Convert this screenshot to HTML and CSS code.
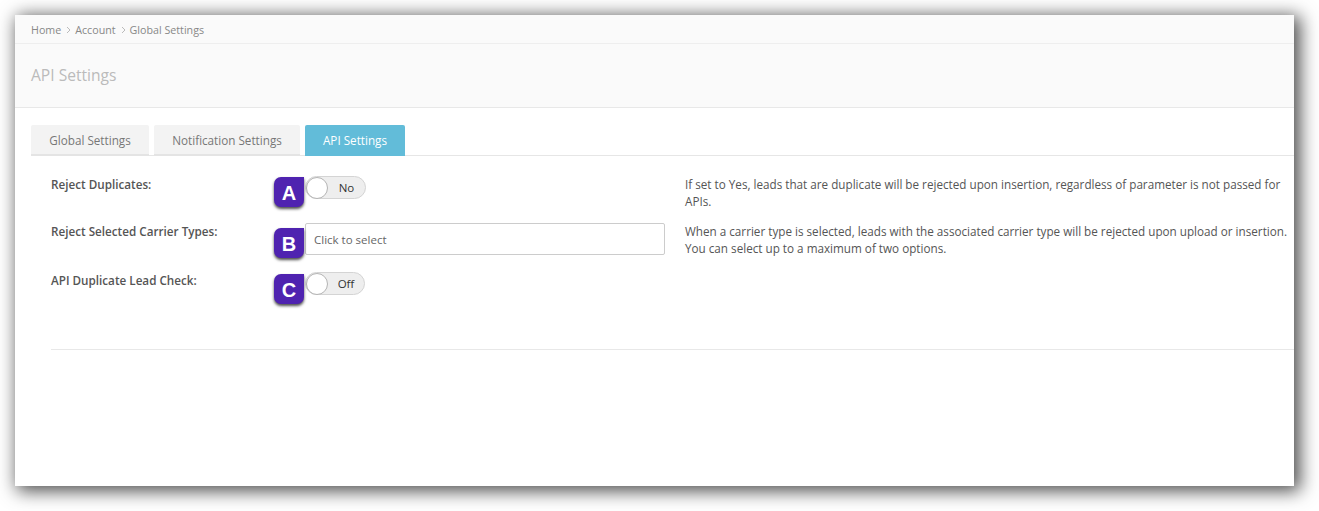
FILE: index.html
```html
<!DOCTYPE html>
<html lang="en">
<head>
<meta charset="utf-8">
<title>API Settings</title>
<link rel="stylesheet" href="styles.css">
</head>
<body>
<main class="window">
  <nav class="crumbs">
    <span>Home</span><svg class="chev" viewBox="0 0 5 8"><path d="M1 1l3 3-3 3"/></svg>
    <span>Account</span><svg class="chev" viewBox="0 0 5 8"><path d="M1 1l3 3-3 3"/></svg>
    <span>Global Settings</span>
  </nav>
  <header class="page-head"><h1>API Settings</h1></header>
  <div class="tabs">
    <a class="tab tab-global">Global Settings</a>
    <a class="tab tab-notif">Notification Settings</a>
    <a class="tab tab-active">API Settings</a>
  </div>
  <section class="form">
    <div class="row row-a">
      <label class="label">Reject Duplicates:</label>
      <div class="control">
        <span class="badge badge-a">A</span>
        <div class="toggle toggle-no"><span class="knob"></span><span class="toggle-text">No</span></div>
      </div>
      <p class="help">If set to Yes, leads that are duplicate will be rejected upon insertion, regardless of parameter is not passed for APIs.</p>
    </div>
    <div class="row row-b">
      <label class="label">Reject Selected Carrier Types:</label>
      <div class="control">
        <span class="badge badge-b">B</span>
        <div class="select">Click to select</div>
      </div>
      <p class="help">When a carrier type is selected, leads with the associated carrier type will be rejected upon upload or insertion. You can select up to a maximum of two options.</p>
    </div>
    <div class="row row-c">
      <label class="label">API Duplicate Lead Check:</label>
      <div class="control">
        <span class="badge badge-c">C</span>
        <div class="toggle toggle-off"><span class="knob"></span><span class="toggle-text">Off</span></div>
      </div>
    </div>
    <hr class="rule">
  </section>
</main>
</body>
</html>
```
FILE: styles.css
```css
* { box-sizing: border-box; }
html, body { margin: 0; padding: 0; background: #fff; }
body { height: 511px; overflow: hidden; font-family: "Open Sans", "Liberation Sans", sans-serif; font-size: 11px; color: #555; }
.window { width: 1279px; height: 471px; margin: 15px 0 0 15px; background: #fff; box-shadow: 4px 3px 17px 2px rgba(0,0,0,.7); overflow: hidden; }
.crumbs { height: 29px; padding: 1px 16px 0; display: flex; align-items: center; gap: 4px; background: #fafafa; border-bottom: 1px solid #eee; color: #888; font-size: 10.7px; }
.crumbs span { display: block; }
.chev { width: 5px; height: 8px; margin: 0 0 0 1px; }
.chev path { fill: none; stroke: #bbb; stroke-width: 1; }
.page-head { height: 64px; padding: 0 16px 2px; display: flex; align-items: center; background: #fafafa; border-bottom: 1px solid #e8e8e8; }
h1 { margin: 0; font-size: 15.6px; font-weight: 400; color: #bbb; }
.tabs { display: flex; gap: 5px; height: 31px; margin: 17px 0 0 16px; border-bottom: 1px solid #e6e6e6; }
.tab { display: flex; align-items: center; justify-content: center; height: 31px; padding-top: 1px; background: #f3f3f3; border-bottom: 2px solid #e4e4e4; border-radius: 2px 2px 0 0; color: #777; font-size: 11.7px; }
.tab-global { width: 118px; }
.tab-notif { width: 146px; }
.tab-active { width: 100px; background: #62bcd9; border-bottom-color: #62bcd9; color: #fff; }
.form { padding: 0 0 0 36px; }
.row { display: flex; align-items: flex-start; }
.row-a { margin-top: 21px; height: 46px; }
.row-b { height: 50px; }
.row-c { min-height: 46px; }
.label { width: 254px; font-weight: 600; font-size: 11.7px; line-height: 16px; color: #555; flex: none; }
.row-a .label, .row-a .help, .row-c .label { margin-top: -1px; }
.control { position: relative; width: 380px; flex: none; }
.help { margin: 0; width: 606px; flex: none; font-size: 11.7px; line-height: 16.5px; color: #555; }
.toggle { display: flex; align-items: center; height: 23px; margin-top: -1px; background: #eee; border: 1px solid #d4d4d4; border-radius: 12px; }
.toggle-no { width: 61px; }
.toggle-off { width: 60px; }
.knob { width: 22px; height: 22px; border-radius: 50%; background: #fff; border: 1px solid #b4b4b4; flex: none; }
.toggle-text { flex: 1; text-align: center; color: #333; font-size: 11.5px; }
.select { width: 360px; height: 32px; padding: 0 8px; display: flex; align-items: center; background: #fff; border: 1px solid #ccc; border-radius: 2px; color: #666; font-size: 11.5px; }
.badge { position: absolute; left: -31px; width: 30px; height: 30px; display: flex; align-items: center; justify-content: center; padding-top: 2px; background: #4f23b0; border-radius: 7px 0 7px 7px; box-shadow: 0 2px 3px rgba(0,0,0,.7); color: #fff; font-family: "Liberation Sans", Arial, sans-serif; font-size: 20px; font-weight: 700; }
.badge-a { top: 0; }
.badge-b { top: 5px; }
.badge-c { top: 1px; }
.rule { height: 1px; margin: 30px 0 0; border: 0; background: #e8e8e8; }
```
